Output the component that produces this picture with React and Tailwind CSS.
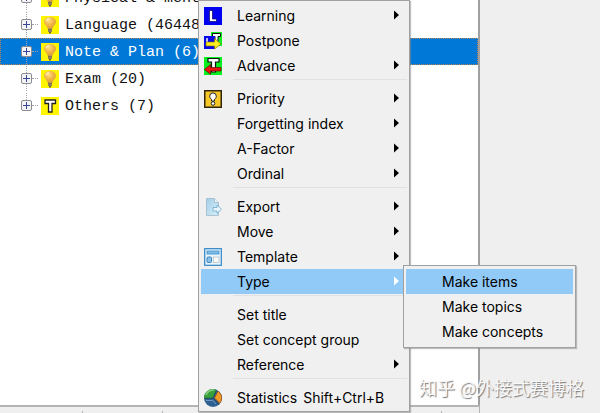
import React from "react";

function BulbIcon() {
  return (
    <svg width="18" height="18" viewBox="0 0 18 18" className="shrink-0" aria-hidden="true">
      <defs>
        <radialGradient id="bulb" cx="0.4" cy="0.3" r="0.7">
          <stop offset="0" stopColor="#ffe08a" />
          <stop offset="0.5" stopColor="#f2b84a" />
          <stop offset="1" stopColor="#dc9838" />
        </radialGradient>
      </defs>
      <rect width="18" height="18" fill="#fff500" />
      <path d="M9 1C5.400 1 3 3.200 3 6c0 2.400 2.300 3.500 3.200 5.300L6.700 13h4.600l.5-1.700C12.700 9.500 15 8.400 15 6 15 3.200 12.600 1 9 1z" fill="url(#bulb)" />
      <path d="M5.200 5c.5-1.500 1.600-2.300 3.100-2.300" stroke="#fff4c8" strokeWidth="1.200" fill="none" />
      <rect x="7" y="12.500" width="4" height="3.500" fill="#a09468" />
      <path d="M7 13.500h4M7 15h4" stroke="#706040" strokeWidth="0.700" />
      <rect x="8" y="16" width="2" height="1.500" fill="#665c3a" />
    </svg>
  );
}

function TopicIcon() {
  return (
    <svg width="18" height="18" viewBox="0 0 18 18" className="shrink-0" aria-hidden="true">
      <rect width="18" height="18" fill="#fff500" />
      <path d="M4 3h10.500v3.500h-3.500v8.500H7.500V6.500H4z" fill="#fff" stroke="#222" strokeWidth="1.300" />
    </svg>
  );
}

function LearningIcon() {
  return (
    <svg width="18" height="18" viewBox="0 0 18 18" aria-hidden="true">
      <rect width="18" height="18" fill="#0000f0" />
      <path d="M5.500 3.500h3v8.500h4v2.500h-7z" fill="#fff" stroke="#000060" strokeWidth="0.700" />
    </svg>
  );
}

function PostponeIcon() {
  return (
    <svg width="18" height="18" viewBox="0 0 18 18" aria-hidden="true">
      <rect x="7" width="11" height="14" fill="#10f020" />
      <path d="M8.500 1.500h8v3h-2.500v6h-3v-6H8.500z" fill="#fff" stroke="#111" />
      <rect y="4" width="11" height="13" fill="#0808e8" />
      <path d="M3 6v4" stroke="#fff" strokeWidth="1.500" />
      <path d="M2 10h8.500V6.500L17 12l-6.500 5v-3H2z" fill="#ffef20" stroke="#887000" strokeWidth="0.700" />
    </svg>
  );
}

function AdvanceIcon() {
  return (
    <svg width="18" height="18" viewBox="0 0 18 18" aria-hidden="true">
      <rect width="18" height="18" fill="#08ee20" />
      <path d="M4 1.500h11v3.500h-3.500v10H7.500v-10H4z" fill="#fff" stroke="#111" strokeWidth="1.200" />
      <path d="M17 10.500H6.500V7.500L.4 12.500l6.100 4.800v-3.300H17z" fill="#ef1010" stroke="#601000" strokeWidth="0.700" />
    </svg>
  );
}

function PriorityIcon() {
  return (
    <svg width="18" height="18" viewBox="0 0 18 18" aria-hidden="true">
      <rect x="0.750" y="0.750" width="16.500" height="16.500" fill="#f5c828" stroke="#30250a" strokeWidth="1.500" />
      <path d="M7.500 11V9.300C6.100 8.300 5.700 7.300 5.700 6.200A3.300 3.300 0 0 1 12.300 6.200c0 1.100-.4 2.100-1.800 3.100V11z" fill="#fff" stroke="#222" />
      <circle cx="9" cy="13.500" r="1.800" fill="#fff" stroke="#222" />
    </svg>
  );
}

function ExportIcon() {
  return (
    <svg width="18" height="18" viewBox="0 0 18 18" aria-hidden="true">
      <defs>
        <linearGradient id="sheet" x1="0" y1="0" x2="1" y2="1">
          <stop offset="0" stopColor="#a3cfe9" />
          <stop offset="1" stopColor="#d9eef8" />
        </linearGradient>
      </defs>
      <path d="M2.500.5h8l4 4v13h-12z" fill="url(#sheet)" stroke="#9bb9cc" strokeWidth="0.800" />
      <path d="M10.500.5v4h4" fill="#eef8fc" stroke="#9bb9cc" strokeWidth="0.800" />
      <path d="M9 9.500h4V7l4.500 4.200-4.500 4.300V13H9z" fill="#e9f6fc" stroke="#6ba8cd" strokeWidth="0.800" />
    </svg>
  );
}

function TemplateIcon() {
  return (
    <svg width="18" height="18" viewBox="0 0 18 18" aria-hidden="true">
      <rect x="0.700" y="0.700" width="16.600" height="16.600" fill="#e8f5fc" stroke="#2d84c4" strokeWidth="1.200" />
      <rect x="3" y="3" width="12" height="3" fill="#80bde8" stroke="#3b8dca" strokeWidth="0.800" />
      <rect x="3" y="9" width="4.500" height="5.500" rx="1" fill="#8cc2e8" stroke="#2d7fbc" strokeWidth="0.900" />
      <rect x="9.500" y="9" width="5.500" height="5.500" fill="#fafafa" stroke="#b8c4cc" strokeWidth="0.800" />
    </svg>
  );
}

function StatisticsIcon() {
  return (
    <svg width="20" height="20" viewBox="0 0 20 20" aria-hidden="true">
      <circle cx="10" cy="10" r="9" fill="#2f6094" />
      <path d="M10 10 1 10.500A9 9 0 0 1 13.500 1.700z" fill="#35a03c" />
      <path d="M3 7a8 8 0 0 1 8-5" stroke="#8bd080" strokeWidth="1.500" fill="none" />
      <path d="M11.500 10 15 3.200c3.500 2 5.200 7.800 1.800 12z" fill="#f29a24" stroke="#99500e" strokeWidth="0.700" />
      <path d="M10 10 1 10.500M10 10l6 6.500M10 10l3.500-8" stroke="#223a4c" strokeWidth="0.700" />
      <path d="M3 12.500h7l3 3.500" stroke="#6d98c4" fill="none" />
    </svg>
  );
}

const tree = [
  { label: "Physical & mental (31)", Icon: BulbIcon },
  { label: "Language (46448)", Icon: BulbIcon },
  { label: "Note & Plan (6)", Icon: BulbIcon, selected: true },
  { label: "Exam (20)", Icon: BulbIcon },
  { label: "Others (7)", Icon: TopicIcon, last: true },
];

const groups = [
  [
    { label: "Learning", Icon: LearningIcon, sub: true },
    { label: "Postpone", Icon: PostponeIcon },
    { label: "Advance", Icon: AdvanceIcon, sub: true },
  ],
  [
    { label: "Priority", Icon: PriorityIcon, sub: true },
    { label: "Forgetting index", sub: true },
    { label: "A-Factor", sub: true },
    { label: "Ordinal", sub: true },
  ],
  [
    { label: "Export", Icon: ExportIcon, sub: true },
    { label: "Move", sub: true },
    { label: "Template", Icon: TemplateIcon, sub: true },
    { label: "Type", sub: true, active: true },
  ],
  [{ label: "Set title" }, { label: "Set concept group" }, { label: "Reference", sub: true }],
  [{ label: "Statistics", Icon: StatisticsIcon, shortcut: "Shift+Ctrl+B" }],
];

function TreeRow({ label, Icon, selected, last }) {
  return (
    <li
      className={
        "flex h-[27px] items-center whitespace-pre border border-dotted pr-2 " +
        (selected ? "border-[#b9834f] bg-[#0078d7] text-white" : "border-transparent text-[#111]")
      }
    >
      <span className="flex w-10 shrink-0 self-stretch pl-5">
        <span className="flex flex-col items-center">
          <span className="w-px flex-1 border-l border-dotted border-[#a0a0a8]" />
          <button
            type="button"
            aria-label={"Expand " + label}
            className="flex size-[11px] items-center justify-center rounded-xs border border-[#8b8b92] bg-[#f4f4f6]"
          >
            <svg width="7" height="7" viewBox="0 0 7 7" aria-hidden="true">
              <path d="M0 3.500h7M3.500 0v7" stroke="#35459a" />
            </svg>
          </button>
          <span className={"w-px flex-1 border-l border-dotted " + (last ? "border-transparent" : "border-[#a0a0a8]")} />
        </span>
        <span className="w-1.5 self-center border-t border-dotted border-[#a0a0a8]" />
      </span>
      <Icon />
      <span className="pt-1 pl-1.5">{label}</span>
    </li>
  );
}

function MenuItem({ label, Icon, sub, active, shortcut }) {
  return (
    <button
      type="button"
      role="menuitem"
      className={"flex h-[25px] w-full items-center whitespace-nowrap pr-2 text-left " + (active ? "bg-[#91c9f7]" : "")}
    >
      <span className="flex w-9 shrink-0 items-center pl-0.5">{Icon && <span className="flex w-5 justify-center"><Icon /></span>}</span>
      <span>{label}</span>
      {shortcut && <span className="pl-1.5">{shortcut}</span>}
      {sub && (
        <svg width="5" height="10" viewBox="0 0 5 10" className="ml-auto mb-0.5" aria-hidden="true">
          <path d="M0 0.500 5 5 0 9.500z" fill={active ? "#fff" : "#000"} />
        </svg>
      )}
    </button>
  );
}

export default function App() {
  return (
    <div className="relative flex h-screen overflow-hidden bg-[#efefef] text-black">
      <main className="flex w-4/5 flex-col">
        <div className="flex-1 overflow-hidden border-r-2 border-[#a0a0a0] bg-white">
          <ul className="-mt-4 font-['Liberation_Mono',monospace] text-[15px]">
            {tree.map((row) => (
              <TreeRow key={row.label} {...row} />
            ))}
          </ul>
        </div>
        <footer className="flex h-2 shrink-0 border-t-2 border-r border-[#b4b4b4] bg-[#efefef] pt-1">
          <span className="w-[83px] border-r border-[#b4b4b4]" />
          <span className="w-20 border-r border-[#b4b4b4]" />
          <span className="w-[279px] border-r border-[#b4b4b4]" />
        </footer>
      </main>

      <div
        role="menu"
        className="absolute top-0 left-[198px] w-[212px] border border-[#a0a0a0] bg-[#f0f0f0] px-0.5 pt-0.5 pb-px font-['Inter',sans-serif] text-sm shadow-[1px_1px_1px_#8888]"
      >
        {groups.map((items, i) => (
          <React.Fragment key={items[0].label}>
            {i > 0 && (
              <div role="separator" className="h-2 pt-px pl-8">
                <div className="h-px bg-[#e2e2e2]" />
              </div>
            )}
            {items.map((item) => (
              <MenuItem key={item.label} {...item} />
            ))}
          </React.Fragment>
        ))}
      </div>

      <div
        role="menu"
        aria-label="Type"
        className="absolute top-[265px] left-[403px] w-[173px] border border-[#a0a0a0] bg-[#f0f0f0] px-0.5 py-[3px] font-['Inter',sans-serif] text-sm shadow-[1px_1px_1px_#8888]"
      >
        <MenuItem label="Make items" active />
        <MenuItem label="Make topics" />
        <MenuItem label="Make concepts" />
      </div>

      <p className="absolute right-4 bottom-3 whitespace-nowrap font-['Noto_Sans_CJK_SC',sans-serif] text-lg leading-7 text-[#f8f8f8] [text-shadow:1px_1px_1px_#777]">
        知乎 @外接式赛博格
      </p>
    </div>
  );
}
